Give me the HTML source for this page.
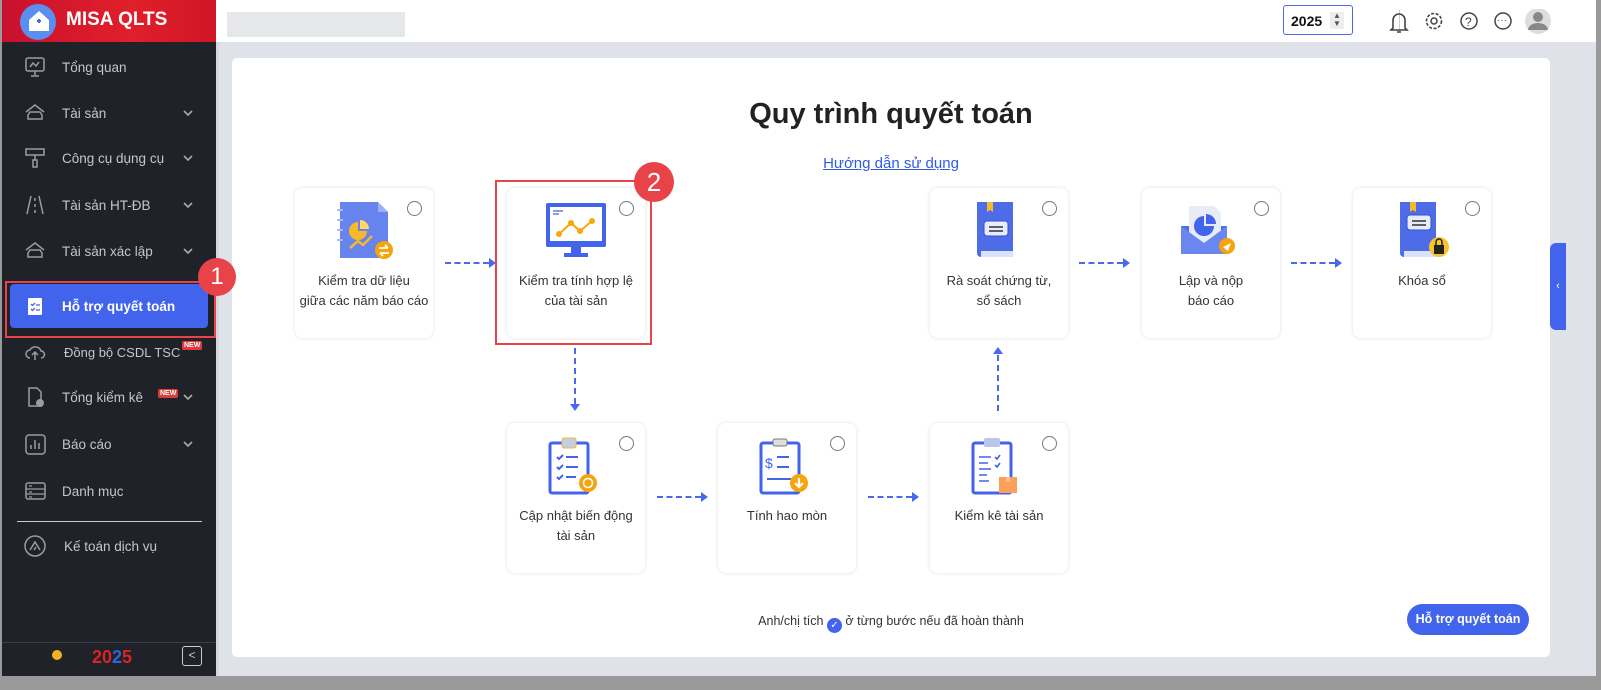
<!DOCTYPE html>
<html><head><meta charset="utf-8"><style>
*{box-sizing:border-box;margin:0;padding:0}
body{width:1601px;height:690px;overflow:hidden;background:#9a9a9a;font-family:"Liberation Sans",Arial,sans-serif;position:relative}
#app{position:absolute;left:2px;top:0;width:1594px;height:676px;background:#dfe3e9;overflow:hidden}
#hdr{position:absolute;left:0;top:0;width:1594px;height:42px;background:#fff}
#logo{position:absolute;left:0;top:0;width:214px;height:42px;background:linear-gradient(90deg,#c8102e,#e0202a 60%,#d01525)}
#logo .t{position:absolute;left:64px;top:9px;color:#fff;font-weight:bold;font-size:19px}
#side{position:absolute;left:0;top:42px;width:214px;height:634px;background:#1f2229}
.it{position:absolute;left:0;width:214px;height:40px;color:#c4c6cb;font-size:13.5px;display:flex;align-items:center}
.it .ic{position:absolute;left:22px;width:22px;height:22px}
.it .lb{position:absolute;left:60px}
.it .ch{position:absolute;left:181px;width:10px;height:10px}
.new{background:#e03b3b;color:#fff;font-size:7px;font-weight:bold;padding:1px 2px;border-radius:2px;position:absolute}
#card{position:absolute;left:230px;top:58px;width:1318px;height:599px;background:#fff;border-radius:5px}
.c{position:absolute;width:138px;height:150px;background:#fff;border-radius:8px;box-shadow:0 0 4px rgba(0,0,0,.13)}
.c .r{position:absolute;right:11px;top:13px;width:15px;height:15px;border:1px solid #777;border-radius:50%}
.c .tx{position:absolute;left:0;width:138px;text-align:center;font-size:13px;color:#333;line-height:20px}
.c svg{position:absolute;left:39px;top:12px}
.ah{position:absolute;height:2px;border-top:2px dashed #4a68ee}
.ah:after{content:"";position:absolute;right:-7px;top:-6px;border-left:7px solid #4a68ee;border-top:5px solid transparent;border-bottom:5px solid transparent}
</style></head><body><div id="app">
<div id="hdr">
 <div id="logo"><div style="position:absolute;left:18px;top:4px;width:36px;height:36px;border-radius:50%;background:#5b8ef0"></div><svg style="position:absolute;left:24px;top:8px" width="26" height="26" viewBox="0 0 26 26"><path d="M3 12L13 3l10 9v11H3z" fill="#fff"/><path d="M11 13h4M13 11v4" stroke="#3b6fe0" stroke-width="2"/></svg><div class="t">MISA QLTS</div></div>
 <div style="position:absolute;left:225px;top:12px;width:178px;height:25px;background:#e6e7ea"></div>
 <div style="position:absolute;left:1281px;top:5px;width:70px;height:30px;border:1px solid #4a68ee;border-radius:3px;font-size:14px;font-weight:bold;padding:7px 0 0 7px;color:#111">2025<span style="position:absolute;left:46px;top:6px;width:14px;height:17px;background:#eee;font-size:8px;color:#555;text-align:center;line-height:8px">▲<br>▼</span></div>
 <div style="position:absolute;left:1397px;top:10px;width:1px;height:22px;background:#ccc"></div>
 <svg style="position:absolute;left:1385px;top:9px" width="180" height="26" viewBox="0 0 180 26">
  <path d="M6 19V11a6 6 0 0112 0v8l2 2H4zM10 23h4" fill="none" stroke="#444" stroke-width="1.6"/>
  <circle cx="47" cy="12" r="3" fill="none" stroke="#444" stroke-width="1.5"/><circle cx="47" cy="12" r="7.5" fill="none" stroke="#444" stroke-width="1.6" stroke-dasharray="3 1.6"/>
  <circle cx="82" cy="12" r="8" fill="none" stroke="#444" stroke-width="1.5"/><text x="78" y="17" font-size="12" fill="#444" font-family="Liberation Sans">?</text>
  <circle cx="116" cy="12" r="8" fill="none" stroke="#444" stroke-width="1.5"/><text x="110" y="14" font-size="10" fill="#444">···</text>
  <circle cx="151" cy="12" r="13" fill="#ddd"/><circle cx="151" cy="8" r="5" fill="#888"/><path d="M141 21a10 7 0 0120 0z" fill="#888"/>
 </svg>
</div>
<div id="side">
 <div class="it" style="top:5px"><svg class="ic" viewBox="0 0 22 22"><rect x="2" y="2" width="18" height="13" rx="2" fill="none" stroke="#9a9ca2" stroke-width="1.5"/><path d="M6 11l3-4 3 3 3-4M11 15v4M7 20h8" fill="none" stroke="#9a9ca2" stroke-width="1.5"/></svg><span class="lb">Tổng quan</span></div>
 <div class="it" style="top:51px"><svg class="ic" viewBox="0 0 22 22"><path d="M2 10L11 3l9 7M4 17h14v-4l-2-3H6l-2 3z" fill="none" stroke="#9a9ca2" stroke-width="1.5"/></svg><span class="lb">Tài sản</span><svg class="ch" viewBox="0 0 10 10"><path d="M1 3l4 4 4-4" fill="none" stroke="#aaa" stroke-width="1.6"/></svg></div>
 <div class="it" style="top:96px"><svg class="ic" viewBox="0 0 22 22"><rect x="2" y="2" width="18" height="6" fill="none" stroke="#9a9ca2" stroke-width="1.5"/><path d="M11 8v5M9 13h4v7H9z" fill="none" stroke="#9a9ca2" stroke-width="1.5"/></svg><span class="lb">Công cụ dụng cụ</span><svg class="ch" viewBox="0 0 10 10"><path d="M1 3l4 4 4-4" fill="none" stroke="#aaa" stroke-width="1.6"/></svg></div>
 <div class="it" style="top:143px"><svg class="ic" viewBox="0 0 22 22"><path d="M7 2L3 20M15 2l4 18M11 4v3M11 10v3M11 16v3" fill="none" stroke="#9a9ca2" stroke-width="1.5"/></svg><span class="lb">Tài sản HT-ĐB</span><svg class="ch" viewBox="0 0 10 10"><path d="M1 3l4 4 4-4" fill="none" stroke="#aaa" stroke-width="1.6"/></svg></div>
 <div class="it" style="top:189px"><svg class="ic" viewBox="0 0 22 22"><path d="M2 10L11 3l9 7M4 17h14v-4l-2-3H6l-2 3z" fill="none" stroke="#9a9ca2" stroke-width="1.5"/></svg><span class="lb">Tài sản xác lập</span><svg class="ch" viewBox="0 0 10 10"><path d="M1 3l4 4 4-4" fill="none" stroke="#aaa" stroke-width="1.6"/></svg></div>
 <div style="position:absolute;left:15px;top:240px;width:185px;height:1px;background:#ccc"></div>
 <div style="position:absolute;left:8px;top:242px;width:198px;height:44px;background:#4263eb;border-radius:4px"></div>
 <div class="it" style="top:244px;color:#fff;font-weight:bold"><svg class="ic" viewBox="0 0 22 22"><rect x="4" y="3" width="14" height="17" rx="1" fill="#fff"/><path d="M7 9l1.5 1.5L11 8M12 10h4M7 14l1.5 1.5L11 13M12 15h4" stroke="#4263eb" stroke-width="1.3" fill="none"/></svg><span class="lb">Hỗ trợ quyết toán</span></div>
 <div style="position:absolute;left:3px;top:239px;width:211px;height:57px;border:2px solid #e9434a"></div>
 <div class="it" style="top:290px"><svg class="ic" viewBox="0 0 22 22"><path d="M6 17a4 4 0 010-8 6 6 0 0111 1 3.5 3.5 0 010 7M11 19v-8M8 14l3-3 3 3" fill="none" stroke="#9a9ca2" stroke-width="1.5"/></svg><span class="lb" style="left:62px;font-size:13px">Đồng bộ CSDL TSC</span><span class="new" style="left:180px;top:9px">NEW</span></div>
 <div class="it" style="top:335px"><svg class="ic" viewBox="0 0 22 22"><path d="M5 2h8l4 4v14H5z" fill="none" stroke="#9a9ca2" stroke-width="1.5"/><circle cx="16" cy="17" r="4" fill="#9a9ca2"/></svg><span class="lb">Tổng kiểm kê</span><span class="new" style="left:156px;top:12px">NEW</span><svg class="ch" viewBox="0 0 10 10"><path d="M1 3l4 4 4-4" fill="none" stroke="#aaa" stroke-width="1.6"/></svg></div>
 <div class="it" style="top:382px"><svg class="ic" viewBox="0 0 22 22"><rect x="2" y="2" width="19" height="19" rx="3" fill="none" stroke="#9a9ca2" stroke-width="1.5"/><path d="M7 16v-4M11 16V7M15 16v-6" stroke="#9a9ca2" stroke-width="1.5"/></svg><span class="lb">Báo cáo</span><svg class="ch" viewBox="0 0 10 10"><path d="M1 3l4 4 4-4" fill="none" stroke="#aaa" stroke-width="1.6"/></svg></div>
 <div class="it" style="top:429px"><svg class="ic" viewBox="0 0 22 22"><rect x="2" y="3" width="19" height="16" rx="2" fill="none" stroke="#9a9ca2" stroke-width="1.5"/><path d="M2 9h19M2 14h19M5 6h3M5 12h3M5 17h3" stroke="#9a9ca2" stroke-width="1.3"/></svg><span class="lb">Danh mục</span></div>
 <div style="position:absolute;left:15px;top:479px;width:185px;height:1px;background:#ccc"></div>
 <div class="it" style="top:484px"><svg class="ic" viewBox="0 0 22 22"><circle cx="11" cy="11" r="10" fill="none" stroke="#9a9ca2" stroke-width="1.5"/><path d="M6 15l5-8 5 8M10 15l2-3" fill="none" stroke="#9a9ca2" stroke-width="1.5"/></svg><span class="lb" style="left:62px">Kế toán dịch vụ</span></div>
 <div style="position:absolute;left:0;top:600px;width:214px;height:1px;background:#3a3d44"></div>
 <div style="position:absolute;left:90px;top:605px;font-weight:bold;color:#d22;font-size:18px">20<span style="color:#2a66e0">2</span>5</div>
 <div style="position:absolute;left:50px;top:608px;width:10px;height:10px;border-radius:50%;background:#f2b21c"></div>
 <div style="position:absolute;left:180px;top:604px;width:20px;height:20px;border:1.5px solid #ccc;border-radius:3px;color:#ccc;font-size:12px;text-align:center;line-height:17px">&lt;</div>
</div>
<div style="position:absolute;left:214px;top:42px;width:3px;height:634px;background:#d5d9df"></div>
<div id="card">
 <div style="position:absolute;left:0;width:1318px;top:40px;text-align:center;font-size:29px;font-weight:bold;color:#222">Quy trình quyết toán</div>
 <div style="position:absolute;left:0;width:1318px;top:97px;text-align:center;font-size:15px;color:#2f5ae8;text-decoration:underline">Hướng dẫn sử dụng</div>

 <div class="c" style="left:63px;top:130px"><svg width="60" height="60" viewBox="0 0 60 60"><path d="M6 2h38l10 10v46H6z" fill="#6784ee"/><path d="M44 2v10h10z" fill="#9db0f5"/><path d="M3 10h6M3 20h6M3 30h6M3 40h6" stroke="#aab8f3" stroke-width="2"/><path d="M24 22a9 9 0 109 9h-9z" fill="#f7b928"/><path d="M26 20v9h9a9 9 0 00-9-9z" fill="#fcd56b"/><path d="M16 48l8-7 5 4 9-9" fill="none" stroke="#f7b928" stroke-width="2.5"/><circle cx="50" cy="50" r="9" fill="#f5a40b"/><path d="M45 48h9M51 45l3 3M55 53h-9M49 56l-3-3" stroke="#fff" stroke-width="1.8" fill="none"/></svg><div class="r"></div><div class="tx" style="top:83px">Kiểm tra dữ liệu<br>giữa các năm báo cáo</div></div>
 <div class="c" style="left:275px;top:130px"><svg width="62" height="56" viewBox="0 0 62 56" style="left:38px;top:14px"><rect x="1" y="1" width="60" height="44" rx="2" fill="#4263eb"/><rect x="5" y="5" width="52" height="34" fill="#fff"/><path d="M8 9h10M8 12h6" stroke="#4263eb" stroke-width="1.2"/><path d="M14 32l12-11 9 8 12-10" stroke="#f7a90c" stroke-width="2" fill="none"/><circle cx="14" cy="32" r="3" fill="#f7a90c"/><circle cx="26" cy="21" r="3" fill="#f7a90c"/><circle cx="35" cy="29" r="3" fill="#f7a90c"/><circle cx="47" cy="19" r="3" fill="#f7a90c"/><path d="M26 45h10v6H26zM19 51h24v4H19z" fill="#4263eb"/></svg><div class="r"></div><div class="tx" style="top:83px">Kiểm tra tính hợp lệ<br>của tài sản</div></div>
 <div class="c" style="left:698px;top:130px"><svg width="60" height="60" viewBox="0 0 60 60"><path d="M8 2h36v55H12a4 4 0 01-4-4z" fill="#4f6ce8"/><path d="M12 51h32v6H12z" fill="#dbe2fb"/><path d="M18 2h6v10l-3-2-3 2z" fill="#f7b928"/><rect x="15" y="21" width="24" height="15" rx="3" fill="#e7ebfb" stroke="#3650c9"/><path d="M20 27h14M20 31h14" stroke="#333" stroke-width="1.5"/></svg><div class="r"></div><div class="tx" style="top:83px">Rà soát chứng từ,<br>sổ sách</div></div>
 <div class="c" style="left:910px;top:130px"><svg width="64" height="60" viewBox="0 0 64 60" style="left:36px"><path d="M3 26h46v28H3z" fill="#4e6de8"/><path d="M11 6h25l7 7v32H11z" fill="#e8ecf6"/><path d="M26 16v10h10a10 10 0 11-10-10z" fill="#4263eb"/><path d="M28 14a10 10 0 0110 10H28z" fill="#4263eb"/><path d="M3 26l23 17 23-17v28H3z" fill="#6a86f0"/><circle cx="49" cy="46" r="8" fill="#f5a40b"/><path d="M45 47l8-4-3 8z" fill="#fff"/></svg><div class="r"></div><div class="tx" style="top:83px">Lập và nộp<br>báo cáo</div></div>
 <div class="c" style="left:1121px;top:130px"><svg width="64" height="62" viewBox="0 0 64 62"><path d="M8 2h36v55H12a4 4 0 01-4-4z" fill="#4f6ce8"/><path d="M12 51h32v6H12z" fill="#dbe2fb"/><path d="M18 2h6v10l-3-2-3 2z" fill="#f7b928"/><rect x="15" y="15" width="24" height="15" rx="3" fill="#e7ebfb" stroke="#3650c9"/><path d="M20 21h14M20 25h14" stroke="#333" stroke-width="1.5"/><circle cx="47" cy="47" r="10" fill="#f7c52a"/><rect x="42" y="45" width="10" height="9" fill="#222"/><path d="M44 45v-3a3 3 0 016 0v3" fill="none" stroke="#222" stroke-width="1.5"/></svg><div class="r"></div><div class="tx" style="top:83px">Khóa sổ</div></div>

 <div class="c" style="left:275px;top:365px"><svg width="60" height="62" viewBox="0 0 60 62"><rect x="4" y="8" width="38" height="50" rx="2" fill="none" stroke="#4263eb" stroke-width="3"/><rect x="16" y="3" width="14" height="10" rx="2" fill="#c3cde8" stroke="#f7b928"/><path d="M11 22l2 2 4-4M11 32l2 2 4-4M11 42l2 2 4-4M20 22h12M20 32h12M20 42h10" stroke="#4263eb" stroke-width="2" fill="none"/><circle cx="42" cy="48" r="9" fill="#f5a40b"/><circle cx="42" cy="48" r="4.5" fill="none" stroke="#fff" stroke-width="1.6"/></svg><div class="r"></div><div class="tx" style="top:83px">Cập nhật biến động<br>tài sản</div></div>
 <div class="c" style="left:486px;top:365px"><svg width="60" height="62" viewBox="0 0 60 62"><rect x="4" y="8" width="38" height="50" rx="2" fill="none" stroke="#4263eb" stroke-width="3"/><rect x="16" y="4" width="14" height="7" rx="2" fill="#ddd" stroke="#777"/><text x="8" y="33" font-size="14" fill="#4263eb" font-family="Liberation Sans">$</text><path d="M20 22h12M20 32h12M10 44h24" stroke="#4263eb" stroke-width="2"/><circle cx="42" cy="48" r="9" fill="#f5a40b"/><path d="M42 43v8M38 48l4 4 4-4" stroke="#fff" stroke-width="2.2" fill="none"/></svg><div class="r"></div><div class="tx" style="top:83px">Tính hao mòn</div></div>
 <div class="c" style="left:698px;top:365px"><svg width="60" height="62" viewBox="0 0 60 62"><rect x="4" y="8" width="38" height="50" rx="2" fill="#fff" stroke="#4263eb" stroke-width="3"/><rect x="15" y="3" width="16" height="9" rx="2" fill="#b8c6ea"/><path d="M10 22h12M10 28h9M10 34h12M10 40h8M10 46h10M26 22l2 2 3-4M26 30l2 2 3-4" stroke="#4263eb" stroke-width="1.6" fill="none"/><rect x="30" y="42" width="18" height="16" fill="#f9a05a"/><path d="M37 42h4v5h-4z" fill="#fcc08c"/></svg><div class="r"></div><div class="tx" style="top:83px">Kiểm kê tài sản</div></div>

 <div class="ah" style="left:213px;top:204px;width:44px"></div>
 <div class="ah" style="left:847px;top:204px;width:44px"></div>
 <div class="ah" style="left:1059px;top:204px;width:44px"></div>
 <div class="ah" style="left:425px;top:438px;width:44px"></div>
 <div class="ah" style="left:636px;top:438px;width:44px"></div>
 <div style="position:absolute;left:342px;top:290px;height:56px;border-left:2px dashed #4a68ee"></div>
 <div style="position:absolute;left:338px;top:346px;border-top:7px solid #4a68ee;border-left:5px solid transparent;border-right:5px solid transparent"></div>
 <div style="position:absolute;left:765px;top:297px;height:56px;border-left:2px dashed #4a68ee"></div>
 <div style="position:absolute;left:761px;top:289px;border-bottom:7px solid #4a68ee;border-left:5px solid transparent;border-right:5px solid transparent"></div>

 <div style="position:absolute;left:263px;top:122px;width:157px;height:165px;border:2px solid #e9434a"></div>
 <div style="position:absolute;left:402px;top:104px;width:40px;height:40px;border-radius:50%;background:#e9434a;color:#fff;font-size:26px;text-align:center;line-height:40px">2</div>

 <div style="position:absolute;left:0;width:1318px;top:556px;text-align:center;font-size:12.5px;color:#333">Anh/chị tích <span style="display:inline-block;width:15px;height:15px;border-radius:50%;background:#4263eb;color:#fff;font-size:10px;line-height:15px;vertical-align:-3px">✓</span> ở từng bước nếu đã hoàn thành</div>
 <div style="position:absolute;left:1175px;top:546px;width:122px;height:31px;border-radius:16px;background:#4263eb;color:#fff;font-size:12.5px;font-weight:bold;text-align:center;line-height:31px">Hỗ trợ quyết toán</div>
</div>
<div style="position:absolute;left:1548px;top:243px;width:16px;height:87px;background:#4263eb;border-radius:6px 0 0 6px;color:#fff;font-size:11px;line-height:87px;text-align:center">‹</div>
<div style="position:absolute;left:196px;top:258px;width:38px;height:38px;border-radius:50%;background:#e9434a;color:#fff;font-size:24px;text-align:center;line-height:38px">1</div>
</div></body></html>
